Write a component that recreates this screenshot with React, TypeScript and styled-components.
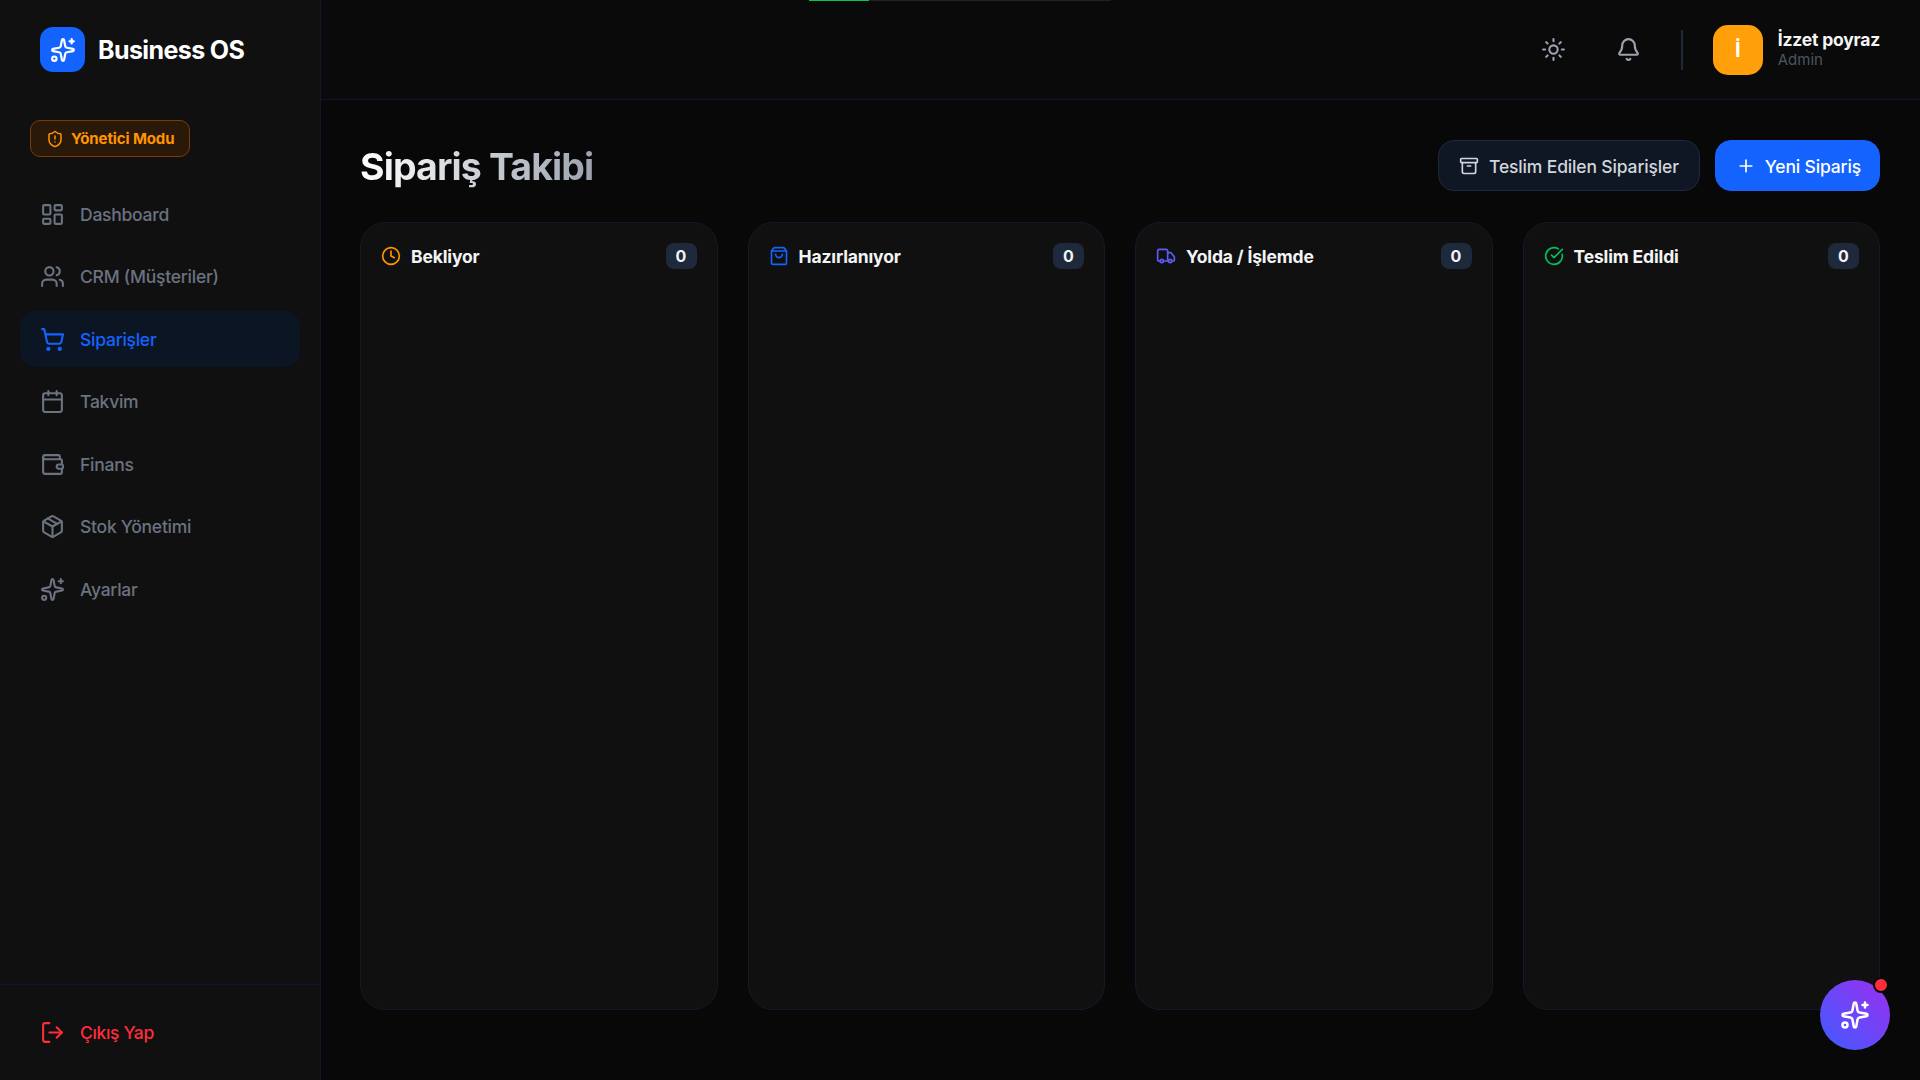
import React from 'react'
import styled, { createGlobalStyle } from 'styled-components'
import {
  Archive,
  Bell,
  Calendar,
  CircleCheckBig,
  Clock,
  LayoutDashboard,
  LogOut,
  Package,
  Plus,
  ShieldAlert,
  ShoppingBag,
  ShoppingCart,
  Sparkles,
  Sun,
  Truck,
  Users,
  Wallet,
} from 'lucide-react'

const GlobalStyle = createGlobalStyle`
  * {
    box-sizing: border-box;
  }

  html,
  body {
    margin: 0;
    height: 100%;
    background: #080808;
  }

  body {
    font-family: 'Inter', 'Liberation Sans', sans-serif;
    overflow: hidden;
  }
`

const Shell = styled.div`
  display: flex;
  height: 100vh;
  background: #080808;
`

const Sidebar = styled.aside`
  display: flex;
  flex-direction: column;
  flex: 0 0 321px;
  background: #101010;
  border-right: 1px solid #13152a;
`

const Brand = styled.div`
  display: flex;
  align-items: center;
  gap: 13px;
  height: 99px;
  padding-left: 40px;
`

const BrandMark = styled.div`
  display: flex;
  align-items: center;
  justify-content: center;
  width: 45px;
  height: 45px;
  border-radius: 13px;
  background: #1463ff;
  color: #fff;
`

const BrandName = styled.span`
  font-size: 25px;
  font-weight: 700;
  letter-spacing: -0.6px;
  color: #fff;
`

const ModeBadge = styled.div`
  display: flex;
  align-items: center;
  gap: 7px;
  align-self: flex-start;
  height: 37px;
  margin: 21px 0 0 30px;
  padding: 0 15px;
  border: 1px solid #7a3a0c;
  border-radius: 10px;
  background: #2a1808;
  color: #ff9500;
  font-size: 15px;
  font-weight: 700;
  letter-spacing: -0.1px;
`

const Nav = styled.nav`
  display: flex;
  flex-direction: column;
  gap: 6.5px;
  margin-top: 29px;
  padding: 0 20px;
`

const NavItem = styled.a<{ $active?: boolean }>`
  display: flex;
  align-items: center;
  gap: 15px;
  height: 56px;
  padding-left: 20px;
  border-radius: 15px;
  background: ${({ $active }) => ($active ? '#0c1524' : 'transparent')};
  color: ${({ $active }) => ($active ? '#1463ff' : '#6b7280')};
  font-size: 17.5px;
  font-weight: 500;
  letter-spacing: -0.25px;
`

const SidebarFooter = styled.div`
  display: flex;
  align-items: center;
  margin-top: auto;
  height: 96px;
  padding: 0 20px;
  border-top: 1px solid #13152a;
`

const LogoutLink = styled.a`
  display: flex;
  align-items: center;
  gap: 15px;
  padding-left: 20px;
  color: #ff2d37;
  font-size: 17.5px;
  font-weight: 500;
  letter-spacing: -0.35px;
`

const Main = styled.main`
  display: flex;
  flex-direction: column;
  flex: 1;
  min-width: 0;
`

const TopBar = styled.header`
  display: flex;
  align-items: center;
  justify-content: flex-end;
  flex: 0 0 100px;
  padding: 0 40px;
  background: #0a0a0a;
  border-bottom: 1px solid #13152a;
`

const IconButton = styled.button<{ $gap: number }>`
  display: flex;
  align-items: center;
  justify-content: center;
  width: 45px;
  height: 45px;
  margin-right: ${({ $gap }) => $gap}px;
  padding: 0;
  border: 0;
  background: none;
  color: #9ca3af;
`

const Divider = styled.div`
  width: 2px;
  height: 40px;
  margin: 0 30px 0 3px;
  background: #1e293b;
`

const Avatar = styled.div`
  display: flex;
  align-items: center;
  justify-content: center;
  width: 50px;
  height: 50px;
  margin-right: 15px;
  border-radius: 15px;
  background: #ff9f0a;
  color: #fff;
  font-size: 20px;
  font-weight: 700;
`

const UserInfo = styled.div`
  display: flex;
  flex-direction: column;
  gap: 1px;
  margin-bottom: 2px;
`

const UserName = styled.span`
  font-size: 17.5px;
  font-weight: 700;
  letter-spacing: -0.2px;
  line-height: 21px;
  color: #f3f4f6;
`

const UserRole = styled.span`
  font-size: 15px;
  line-height: 18px;
  color: #4b5563;
`

const Content = styled.section`
  display: flex;
  flex-direction: column;
  flex: 1;
  min-height: 0;
  padding: 40px 40px 70px 39px;
`

const PageHead = styled.div`
  display: flex;
  align-items: center;
  justify-content: space-between;
  height: 51px;
  margin-bottom: 31px;
`

const Title = styled.h1`
  margin: 0;
  padding-top: 2px;
  font-size: 37.5px;
  font-weight: 700;
  letter-spacing: -0.9px;
  background: linear-gradient(90deg, #ffffff 0%, #9ca3af 100%);
  -webkit-background-clip: text;
  background-clip: text;
  color: transparent;
`

const Actions = styled.div`
  display: flex;
  align-items: center;
  gap: 15px;
`

const Button = styled.button<{ $primary?: boolean }>`
  display: flex;
  align-items: center;
  gap: ${({ $primary }) => ($primary ? '9px' : '10px')};
  height: 51px;
  padding: 1px ${({ $primary }) => ($primary ? '18px' : '20px')} 0 20px;
  border: 1px solid ${({ $primary }) => ($primary ? '#1463ff' : '#1e293b')};
  border-radius: 16px;
  background: ${({ $primary }) => ($primary ? '#1463ff' : '#0f1724')};
  color: ${({ $primary }) => ($primary ? '#fff' : '#d1d5db')};
  font-family: inherit;
  font-size: 17.5px;
  font-weight: 500;
  letter-spacing: -0.15px;
`

const Board = styled.div`
  display: grid;
  grid-template-columns: repeat(4, 1fr);
  gap: 30px;
  flex: 1;
  min-height: 0;
`

const Column = styled.div`
  padding: 20px;
  border: 1px solid #121a2a;
  border-radius: 25px;
  background: #101010;
`

const ColumnHead = styled.div`
  display: flex;
  align-items: center;
  height: 26px;
`

const ColumnIcon = styled.span<{ $color: string }>`
  display: flex;
  margin-right: 10px;
  color: ${({ $color }) => $color};
`

const ColumnTitle = styled.span`
  flex: 1;
  padding-top: 1px;
  font-size: 17.5px;
  font-weight: 700;
  letter-spacing: -0.15px;
  color: #f3f4f6;
`

const Count = styled.span`
  display: flex;
  align-items: center;
  justify-content: center;
  width: 31px;
  height: 26px;
  border-radius: 8px;
  background: #1e293b;
  color: #f3f4f6;
  font-size: 16px;
  font-weight: 700;
`

const LoaderTrack = styled.div`
  position: fixed;
  top: 0;
  left: 809px;
  width: 302px;
  height: 1px;
  background: #222;
`

const LoaderBar = styled.div`
  width: 60px;
  height: 100%;
  background: #00c853;
`

const Fab = styled.button`
  position: fixed;
  right: 30px;
  bottom: 30px;
  display: flex;
  align-items: center;
  justify-content: center;
  width: 70px;
  height: 70px;
  padding: 0;
  border: 0;
  border-radius: 50%;
  background: linear-gradient(45deg, #3f5cff 0%, #9b2ff0 100%);
  color: #fff;
`

const FabDot = styled.span`
  position: absolute;
  top: -3px;
  right: 1px;
  width: 16px;
  height: 16px;
  border: 2px solid #0a0a0a;
  border-radius: 50%;
  background: #ff2d37;
`

const navItems = [
  { label: 'Dashboard', icon: LayoutDashboard },
  { label: 'CRM (Müşteriler)', icon: Users },
  { label: 'Siparişler', icon: ShoppingCart, active: true },
  { label: 'Takvim', icon: Calendar },
  { label: 'Finans', icon: Wallet },
  { label: 'Stok Yönetimi', icon: Package },
  { label: 'Ayarlar', icon: Sparkles },
]

const columns = [
  { label: 'Bekliyor', icon: Clock, color: '#ff9500' },
  { label: 'Hazırlanıyor', icon: ShoppingBag, color: '#1463ff' },
  { label: 'Yolda / İşlemde', icon: Truck, color: '#5b5bf6' },
  { label: 'Teslim Edildi', icon: CircleCheckBig, color: '#00c060' },
]

const App = () => {
  return (
    <>
      <GlobalStyle />
      <LoaderTrack>
        <LoaderBar />
      </LoaderTrack>
      <Shell>
        <Sidebar>
          <Brand>
            <BrandMark>
              <Sparkles size={26} />
            </BrandMark>
            <BrandName>Business OS</BrandName>
          </Brand>
          <ModeBadge>
            <ShieldAlert size={18} />
            Yönetici Modu
          </ModeBadge>
          <Nav>
            {navItems.map(({ label, icon: Icon, active }) => (
              <NavItem key={label} $active={active}>
                <Icon size={25} strokeWidth={2} />
                {label}
              </NavItem>
            ))}
          </Nav>
          <SidebarFooter>
            <LogoutLink>
              <LogOut size={25} />
              Çıkış Yap
            </LogoutLink>
          </SidebarFooter>
        </Sidebar>
        <Main>
          <TopBar>
            <IconButton $gap={30}>
              <Sun size={25} />
            </IconButton>
            <IconButton $gap={27}>
              <Bell size={25} />
            </IconButton>
            <Divider />
            <Avatar>İ</Avatar>
            <UserInfo>
              <UserName>İzzet poyraz</UserName>
              <UserRole>Admin</UserRole>
            </UserInfo>
          </TopBar>
          <Content>
            <PageHead>
              <Title>Sipariş Takibi</Title>
              <Actions>
                <Button>
                  <Archive size={20} />
                  Teslim Edilen Siparişler
                </Button>
                <Button $primary>
                  <Plus size={20} />
                  Yeni Sipariş
                </Button>
              </Actions>
            </PageHead>
            <Board>
              {columns.map(({ label, icon: Icon, color }) => (
                <Column key={label}>
                  <ColumnHead>
                    <ColumnIcon $color={color}>
                      <Icon size={20} />
                    </ColumnIcon>
                    <ColumnTitle>{label}</ColumnTitle>
                    <Count>0</Count>
                  </ColumnHead>
                </Column>
              ))}
            </Board>
          </Content>
        </Main>
      </Shell>
      <Fab>
        <Sparkles size={30} />
        <FabDot />
      </Fab>
    </>
  )
}

export default App
